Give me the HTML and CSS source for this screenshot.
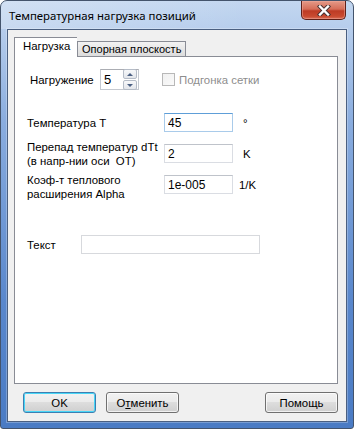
FILE: index.html
```html
<!DOCTYPE html>
<html lang="ru">
<head>
    <meta charset="UTF-8">
    <title>Температурная нагрузка позиций</title>
    <link rel="stylesheet" href="styles.css">
</head>
<body>
    <div class="window">
        <div class="titlebar">
            <span class="title">Температурная нагрузка позиций</span>
            <button class="close-btn">
                <svg width="14" height="11" viewBox="0 0 14 11">
                    <path d="M3 1.5 L11 9.5 M11 1.5 L3 9.5" stroke="#4a3434" stroke-width="4.4" stroke-linecap="square"/>
                    <path d="M3 1.5 L11 9.5 M11 1.5 L3 9.5" stroke="#fff" stroke-width="2.4" stroke-linecap="square"/>
                </svg>
            </button>
        </div>

        <div class="client">
            <!-- вкладки -->
            <div class="tabs">
                <div class="tab tab-active">Нагрузка</div>
                <div class="tab tab-second">Опорная плоскость</div>
            </div>

            <div class="tab-panel">
                <div class="load-row">
                    <span class="load-label">Нагружение</span>
                    <div class="spinner">
                        <span class="spinner-value">5</span>
                        <div class="spin-buttons">
                            <span class="spin-btn"><i class="arrow-up"></i></span>
                            <span class="spin-btn"><i class="arrow-down"></i></span>
                        </div>
                    </div>
                    <span class="check disabled"><span class="check-box"></span>Подгонка сетки</span>
                </div>

                <div class="fields">
                    <span class="field-label">Температура Т</span>
                    <input class="field field-focus" type="text" value="45">
                    <span class="unit unit-shift">°</span>

                    <span class="field-label">Перепад температур dTt<br>(в напр-нии оси &nbsp;ОТ)</span>
                    <input class="field" type="text" value="2">
                    <span class="unit unit-shift">K</span>

                    <span class="field-label label-low">Коэф-т теплового<br>расширения Alpha</span>
                    <input class="field" type="text" value="1e-005">
                    <span class="unit">1/K</span>
                </div>

                <div class="text-row">
                    <span class="field-label">Текст</span>
                    <input class="field field-wide" type="text" value="">
                </div>
            </div>

            <div class="buttons">
                <button class="btn btn-default">OK</button>
                <button class="btn">О<u>т</u>менить</button>
                <button class="btn btn-right">Помощь</button>
            </div>
        </div>
    </div>
</body>
</html>
```

FILE: styles.css
```css
body {
    margin: 0;
    padding: 0;
    background: #ffffff;
    font-family: "Liberation Sans", Arial, sans-serif;
    font-size: 11.4px;
    color: #000;
}

.window {
    width: 354px;
    height: 429px;
    box-sizing: border-box;
    border: 1px solid #44546c;
    border-radius: 7px 7px 3px 3px;
    background: linear-gradient(to bottom, #c3d7f0 0, #b6cdec 28px, #8aaddf 120px, #5987cc 300px, #4a7bc4 100%);
    display: flex;
    flex-direction: column;
    overflow: hidden;
}

.titlebar {
    height: 28px;
    display: flex;
    align-items: flex-start;
    padding-left: 8px;
    background: linear-gradient(to right, rgba(255,255,255,0.25), rgba(255,255,255,0) 70%);
}

.title {
    font-family: "Noto Sans", "Open Sans", sans-serif;
    font-size: 11.4px;
    line-height: 29px;
    color: #000;
}

.close-btn {
    margin-left: auto;
    margin-right: 7px;
    width: 45px;
    height: 19px;
    padding: 0;
    border: 1px solid #5e2019;
    border-top: none;
    border-radius: 0 0 5px 5px;
    background: linear-gradient(to bottom, #e49a88 0, #d56d58 45%, #bd3b25 55%, #c94a30 85%, #d8705a 100%);
    box-shadow: inset 0 0 0 1px rgba(240, 170, 155, 0.5);
    display: flex;
    align-items: center;
    justify-content: center;
}

.client {
    margin: 0 6px;
    height: 393px;
    box-sizing: border-box;
    border: 1px solid #4a5f80;
    box-shadow: 0 0 0 1px rgba(255, 255, 255, 0.25);
    background: #f0f0f0;
    padding: 7px 8px 8px 6px;
    display: flex;
    flex-direction: column;
}

/* вкладки */
.tabs {
    display: flex;
    align-items: flex-end;
    height: 20px;
    position: relative;
    z-index: 1;
}

.tab {
    height: 14px;
    box-sizing: content-box;
    border: 1px solid #898c95;
    border-bottom: none;
    background: linear-gradient(to bottom, #f2f2f2, #dcdcdc);
    font-size: 11px;
    line-height: 14px;
    margin-bottom: 1px;
    white-space: nowrap;
}

.tab-active {
    width: 54px;
    height: 19px;
    margin-bottom: 0;
    padding-left: 8px;
    background: #fff;
    font-size: 11.4px;
    line-height: 16px;
    border-right: none;
}

.tab-second {
    width: 103px;
    padding-left: 4px;
}

.tab-panel {
    margin-top: -1px;
    height: 328px;
    box-sizing: border-box;
    border: 1px solid #898c95;
    background: #fff;
    padding: 12px 0 0 0;
}

.load-row {
    display: flex;
    align-items: center;
    height: 21px;
    padding-left: 15px;
}

.load-label {
    width: 70px;
}

.spinner {
    width: 39px;
    height: 21px;
    box-sizing: border-box;
    border: 1px solid #c5c9d0;
    border-top-color: #abadb3;
    display: flex;
    align-items: center;
}

.spinner-value {
    flex: 1;
    padding-left: 3px;
    font-size: 13px;
}

.spin-buttons {
    width: 14px;
    display: flex;
    flex-direction: column;
    gap: 1px;
    margin-right: 1px;
}

.spin-btn {
    height: 8px;
    border: 1px solid #b5bcc7;
    border-radius: 2px;
    background: linear-gradient(to bottom, #f7f8fa, #e3e6eb);
    display: flex;
    align-items: center;
    justify-content: center;
}

.arrow-up {
    border-left: 3px solid transparent;
    border-right: 3px solid transparent;
    border-bottom: 3px solid #4a5f82;
}

.arrow-down {
    border-left: 3px solid transparent;
    border-right: 3px solid transparent;
    border-top: 3px solid #4a5f82;
}

.check {
    display: flex;
    align-items: center;
    gap: 4px;
    margin-left: 23px;
}

.check.disabled {
    color: #8d8d8d;
}

.check-box {
    width: 11px;
    height: 11px;
    border: 1px solid #b8b8b8;
    background: linear-gradient(to bottom right, #f0f0f0, #fafafa);
}

.fields {
    display: grid;
    grid-template-columns: 137px 69px auto;
    grid-auto-rows: 19px;
    row-gap: 12px;
    align-items: center;
    margin-top: 23px;
    padding-left: 12px;
}

.field-label {
    line-height: 14px;
    white-space: nowrap;
}

.label-low {
    margin-top: 5px;
}

.field {
    height: 19px;
    box-sizing: border-box;
    border: 1px solid #dadde3;
    border-top-color: #bfc3ca;
    padding: 0 3px;
    font-family: "Liberation Sans", Arial, sans-serif;
    font-size: 12px;
    color: #000;
    outline: none;
    width: 69px;
}

.field-focus {
    border-color: #a9cbea;
    border-top-color: #5e9ed8;
}

.unit {
    padding-left: 6px;
}

.unit-shift {
    padding-left: 10px;
}

.text-row {
    display: flex;
    align-items: center;
    margin-top: 41px;
    padding-left: 12px;
}

.text-row .field-label {
    width: 54px;
}

.field-wide {
    width: 179px;
    border-color: #d7d9dd;
}

.buttons {
    display: flex;
    gap: 10px;
    margin-top: 8px;
    padding-left: 9px;
}

.btn {
    width: 73px;
    height: 21px;
    padding: 0;
    border: 1px solid #707070;
    border-radius: 3px;
    background: linear-gradient(to bottom, #f2f2f2 0, #ebebeb 45%, #dddddd 50%, #cfcfcf 100%);
    box-shadow: inset 0 0 0 1px rgba(255, 255, 255, 0.7);
    font-family: "Liberation Sans", Arial, sans-serif;
    font-size: 11.4px;
    color: #000;
}

.btn-default {
    border-color: #3c7fb1;
    box-shadow: inset 0 0 0 1px #48d6f7;
}

.btn-right {
    margin-left: auto;
}
```
